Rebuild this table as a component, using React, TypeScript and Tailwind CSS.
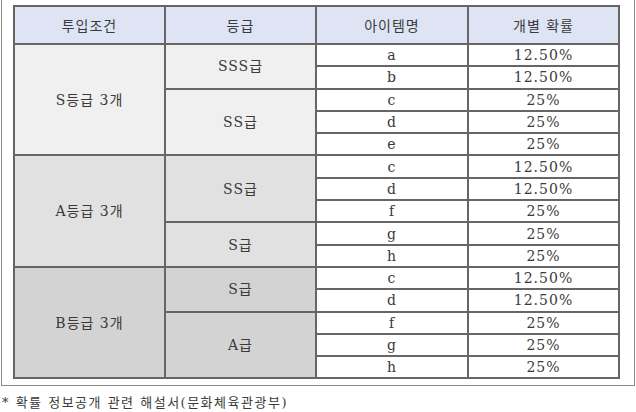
import React from 'react';

type Row = { item: string; prob: string };
type Grade = { name: string; rows: Row[] };
type Group = { label: string; bg: string; grades: Grade[] };

const groups: Group[] = [
  {
    label: 'S등급 3개',
    bg: 'bg-[#f0f0f0]',
    grades: [
      { name: 'SSS급', rows: [{ item: 'a', prob: '12.50%' }, { item: 'b', prob: '12.50%' }] },
      { name: 'SS급', rows: [{ item: 'c', prob: '25%' }, { item: 'd', prob: '25%' }, { item: 'e', prob: '25%' }] },
    ],
  },
  {
    label: 'A등급 3개',
    bg: 'bg-[#e1e1e1]',
    grades: [
      { name: 'SS급', rows: [{ item: 'c', prob: '12.50%' }, { item: 'd', prob: '12.50%' }, { item: 'f', prob: '25%' }] },
      { name: 'S급', rows: [{ item: 'g', prob: '25%' }, { item: 'h', prob: '25%' }] },
    ],
  },
  {
    label: 'B등급 3개',
    bg: 'bg-[#d3d3d3]',
    grades: [
      { name: 'S급', rows: [{ item: 'c', prob: '12.50%' }, { item: 'd', prob: '12.50%' }] },
      { name: 'A급', rows: [{ item: 'f', prob: '25%' }, { item: 'g', prob: '25%' }, { item: 'h', prob: '25%' }] },
    ],
  },
];

const cell = 'border-2 border-[#666] text-center align-middle p-0';

export default function App() {
  return (
    <div
      className="w-[636px] h-[412px] bg-white text-[#3a3a3a] overflow-hidden"
      style={{ fontFamily: '"DejaVu Serif", "Noto Sans CJK KR", serif' }}
    >
      <div className="ml-[1px] w-[634px] h-[386px] border-l border-r border-b border-[#8a8a8a] pl-[11px] pt-[5px]">
        <table className="w-[605px] table-fixed border-collapse border-2 border-[#4a4a4a] text-[14px] tracking-[1px] leading-none">
          <colgroup>
            <col className="w-[151px]" />
            <col className="w-[151px]" />
            <col className="w-[152px]" />
            <col className="w-[151px]" />
          </colgroup>
          <thead>
            <tr className="h-[38px] bg-[#dfe4f5]">
              <th className={`${cell} font-normal pt-[2px]`}>투입조건</th>
              <th className={`${cell} font-normal pt-[2px]`}>등급</th>
              <th className={`${cell} font-normal pt-[2px]`}>아이템명</th>
              <th className={`${cell} font-normal pt-[2px]`}>개별 확률</th>
            </tr>
          </thead>
          <tbody>
            {groups.map((g) => {
              const total = g.grades.reduce((n, gr) => n + gr.rows.length, 0);
              return g.grades.map((gr, gi) =>
                gr.rows.map((r, ri) => (
                  <tr key={`${g.label}-${gi}-${ri}`} className="h-[22.3px]">
                    {gi === 0 && ri === 0 && (
                      <td rowSpan={total} className={`${cell} ${g.bg}`}>
                        {g.label}
                      </td>
                    )}
                    {ri === 0 && (
                      <td rowSpan={gr.rows.length} className={`${cell} ${g.bg}`}>
                        {gr.name}
                      </td>
                    )}
                    <td className={`${cell} bg-white`}>{r.item}</td>
                    <td className={`${cell} bg-white`}>{r.prob}</td>
                  </tr>
                ))
              );
            })}
          </tbody>
        </table>
      </div>
      <p className="mt-[10px] pl-[2px] text-[13px] tracking-[1.5px] leading-none">
        * 확률 정보공개 관련 해설서(문화체육관광부)
      </p>
    </div>
  );
}
